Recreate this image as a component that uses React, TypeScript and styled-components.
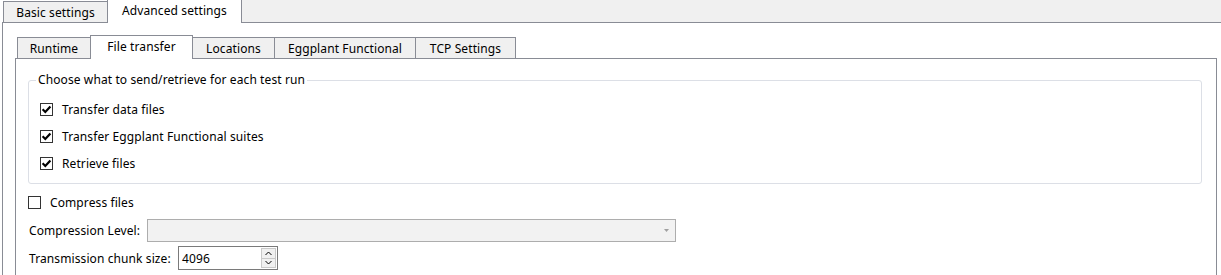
import React from 'react';
import styled, { createGlobalStyle, css } from 'styled-components';

const GlobalStyle = createGlobalStyle`
  html, body {
    margin: 0;
    padding: 0;
    background: #ffffff;
  }
  body {
    font-family: "Noto Sans", "DejaVu Sans", sans-serif;
    font-size: 12px;
    letter-spacing: 0.1px;
    color: #000000;
  }
`;

const BORDER = '#898c95';

const Window = styled.div`
  width: 1221px;
  height: 275px;
  overflow: hidden;
  background: #ffffff;
`;

const TabBar = styled.div<{ $inset?: number; $height: number }>`
  display: flex;
  align-items: flex-end;
  height: ${p => p.$height}px;
  padding-left: ${p => p.$inset ?? 0}px;
`;

const Tab = styled.div<{ $active?: boolean; $w: number; $flat?: boolean }>`
  box-sizing: border-box;
  width: ${p => p.$w}px;
  height: 21px;
  display: flex;
  align-items: center;
  justify-content: center;
  padding-top: 1px;
  margin-left: -1px;
  border: 1px solid ${BORDER};
  border-bottom: none;
  background: #f0f0f0;
  white-space: nowrap;
  position: relative;

  &:first-child {
    margin-left: 0;
  }

  ${p => p.$active && css`
    height: ${p.$flat ? 23 : 24}px;
    margin-bottom: -1px;
    padding-top: 0;
    padding-bottom: 2px;
    background: #ffffff;
    z-index: 1;
    ${p.$flat ? 'border-top: none;' : ''}
  `}
`;

const TabFiller = styled.div`
  flex: 1;
  align-self: stretch;
  background: #f0f0f0;
`;

const OuterPane = styled.div`
  margin-left: 2px;
  border-top: 1px solid ${BORDER};
  border-left: 1px solid ${BORDER};
  padding: 12px 4px 0 12px;
  height: 260px;
`;

const InnerPane = styled.div`
  border: 1px solid ${BORDER};
  border-bottom: none;
  padding: 13px 14px 0 12px;
  height: 240px;
`;

const Group = styled.fieldset`
  margin: 0;
  padding: 0;
  min-width: 0;
  border: 1px solid #dcdfe6;
  border-radius: 3px;
`;

const GroupTitle = styled.legend`
  margin-left: 7px;
  padding: 0 2px;
  line-height: 16px;
`;

const CheckList = styled.div`
  display: flex;
  flex-direction: column;
  padding: 8px 0 6px 11px;
`;

const Row = styled.label<{ $h?: number }>`
  display: flex;
  align-items: center;
  height: ${p => p.$h ?? 27}px;
  gap: 9px;
  white-space: nowrap;
`;

const Box = styled.span`
  box-sizing: border-box;
  width: 13px;
  height: 13px;
  border: 1px solid #333333;
  background: #ffffff;
  display: flex;
  align-items: center;
  justify-content: center;
  flex: none;
`;

const Form = styled.div`
  display: flex;
  flex-direction: column;
  margin-top: 4px;
`;

const FormRow = styled.div`
  display: flex;
  align-items: center;
  height: 28px;
`;

const FieldLabel = styled.span<{ $w: number }>`
  width: ${p => p.$w}px;
  padding-left: 1px;
  box-sizing: border-box;
  white-space: nowrap;
  flex: none;
`;

const Combo = styled.div`
  box-sizing: border-box;
  width: 529px;
  height: 23px;
  border: 1px solid #adadad;
  background: #f2f2f2;
  display: flex;
  align-items: center;
  justify-content: flex-end;
  padding-right: 6px;
`;

const Spin = styled.div`
  box-sizing: border-box;
  width: 100px;
  height: 24px;
  border: 1px solid #7a7a7a;
  background: #ffffff;
  display: flex;
  align-items: center;
  padding: 1px 1px 1px 3px;
`;

const SpinValue = styled.span`
  flex: 1;
`;

const SpinButtons = styled.div`
  box-sizing: border-box;
  width: 15px;
  height: 20px;
  border: 1px solid #c9c9c9;
  background: #f0f0f0;
  display: flex;
  flex-direction: column;
`;

const SpinButton = styled.div<{ $down?: boolean }>`
  flex: 1;
  display: flex;
  align-items: center;
  justify-content: center;
  ${p => p.$down && css`border-top: 1px solid #c9c9c9;`}
`;

const CheckMark = () => (
  <svg width="11" height="11" viewBox="0 0 11 11">
    <path d="M1.6 5.3 L4.3 8 L9.4 2.4" fill="none" stroke="#000" strokeWidth="2.2" />
  </svg>
);

const Check: React.FC<{ checked?: boolean; label: string; h?: number }> = ({ checked, label, h }) => (
  <Row $h={h}>
    <Box>{checked && <CheckMark />}</Box>
    {label}
  </Row>
);

const Chevron: React.FC<{ down?: boolean }> = ({ down }) => (
  <svg width="7" height="5" viewBox="0 0 7 5">
    <path d={down ? 'M0.5 1 L3.5 4 L6.5 1' : 'M0.5 4 L3.5 1 L6.5 4'} fill="none" stroke="#000" strokeWidth="1" />
  </svg>
);

const App: React.FC = () => (
  <Window>
    <GlobalStyle />
    <TabBar $height={22} $inset={3}>
      <Tab $w={105}>Basic settings</Tab>
      <Tab $w={135} $active $flat>Advanced settings</Tab>
      <TabFiller />
    </TabBar>
    <OuterPane>
      <TabBar $height={23} $inset={2}>
        <Tab $w={74}>Runtime</Tab>
        <Tab $w={103} $active>File transfer</Tab>
        <Tab $w={83}>Locations</Tab>
        <Tab $w={142}>Eggplant Functional</Tab>
        <Tab $w={101}>TCP Settings</Tab>
      </TabBar>
      <InnerPane>
        <Group>
          <GroupTitle>Choose what to send/retrieve for each test run</GroupTitle>
          <CheckList>
            <Check checked label="Transfer data files" />
            <Check checked label="Transfer Eggplant Functional suites" />
            <Check checked label="Retrieve files" />
          </CheckList>
        </Group>
        <Form>
          <Check label="Compress files" h={28} />
          <FormRow>
            <FieldLabel $w={119}>Compression Level:</FieldLabel>
            <Combo>
              <svg width="5" height="3" viewBox="0 0 5 3">
                <path d="M0 0 H5 L2.5 3 Z" fill="#a0a0a0" />
              </svg>
            </Combo>
          </FormRow>
          <FormRow>
            <FieldLabel $w={150}>Transmission chunk size:</FieldLabel>
            <Spin>
              <SpinValue>4096</SpinValue>
              <SpinButtons>
                <SpinButton><Chevron /></SpinButton>
                <SpinButton $down><Chevron down /></SpinButton>
              </SpinButtons>
            </Spin>
          </FormRow>
        </Form>
      </InnerPane>
    </OuterPane>
  </Window>
);

export default App;
